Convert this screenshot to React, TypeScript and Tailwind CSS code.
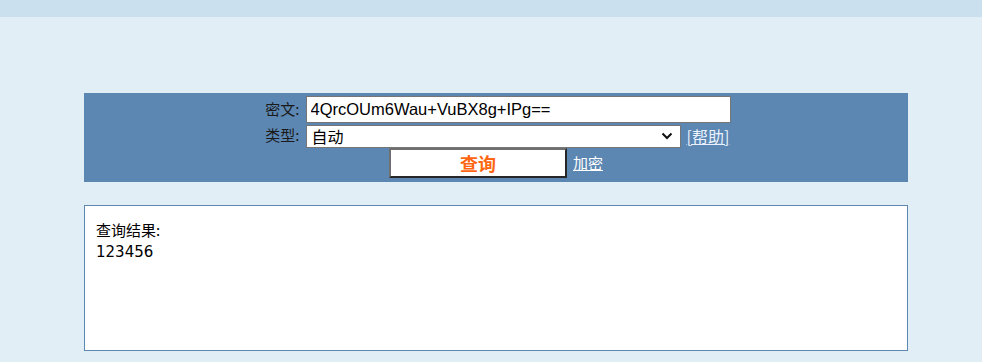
import React, { useState } from 'react';

const cjk = '"Noto Sans CJK SC", "Liberation Sans", sans-serif';

const App: React.FC = () => {
  const [cipher, setCipher] = useState('4QrcOUm6Wau+VuBX8g+IPg==');
  const [kind, setKind] = useState('auto');

  return (
    <div className="min-h-[362px] bg-[#e1eef6]" style={{ fontFamily: cjk }}>
      <div className="h-[17px] bg-[#cae0ee]" />

      <div className="ml-[84px] mt-[76px] w-[824px]">
        {/* query form */}
        <div className="flex justify-center bg-[#5c87b2] pt-[3px] pb-[4px]">
          <div className="flex flex-col">
            <div className="flex items-center h-[27px]">
              <label className="w-[44px] pr-[6px] text-right text-[15px] text-[#1a1a1a]">密文:</label>
              <input
                value={cipher}
                onChange={e => setCipher(e.target.value)}
                className="w-[425px] h-[27px] border border-[#767676] bg-white px-[4px] text-[16.5px] text-black outline-none"
                style={{ fontFamily: '"Liberation Sans", Arial, sans-serif' }}
              />
            </div>
            <div className="flex items-center h-[23px] mt-[1px]">
              <label className="w-[44px] pr-[6px] text-right text-[15px] text-[#1a1a1a]">类型:</label>
              <div className="relative w-[375px] h-[23px]">
                <select
                  value={kind}
                  onChange={e => setKind(e.target.value)}
                  className="appearance-none w-full h-full border border-[#767676] bg-white pl-[5px] text-[16px] leading-[20px] text-black outline-none"
                >
                  <option value="auto">自动</option>
                  <option value="md5">md5</option>
                  <option value="sha1">sha1</option>
                </select>
                <svg className="absolute right-[8px] top-[8px] pointer-events-none" width="12" height="8" viewBox="0 0 12 8">
                  <path d="M1.5 1.5 L6 6 L10.5 1.5" fill="none" stroke="#111" strokeWidth="2" />
                </svg>
              </div>
              <a href="#" className="ml-[6px] text-[16px] text-[#eaf2ff] underline">[帮助]</a>
            </div>
            <div className="flex items-center justify-center h-[30px] mt-[1px]">
              <button className="w-[178px] h-[30px] border-2 border-t-[#707070] border-l-[#707070] border-r-[#262626] border-b-[#262626] bg-white text-[18px] font-bold text-[#ff6611]">
                查询
              </button>
              <a href="#" className="ml-[6px] text-[15px] text-white underline">加密</a>
            </div>
          </div>
        </div>

        {/* result */}
        <div className="mt-[23px] h-[146px] border border-[#5c87b2] bg-white px-[11px] pt-[12px] text-[15px] leading-[23px] text-black">
          <div>查询结果:</div>
          <div style={{ fontFamily: '"DejaVu Sans", sans-serif' }}>123456</div>
        </div>
      </div>
    </div>
  );
};

export default App;
